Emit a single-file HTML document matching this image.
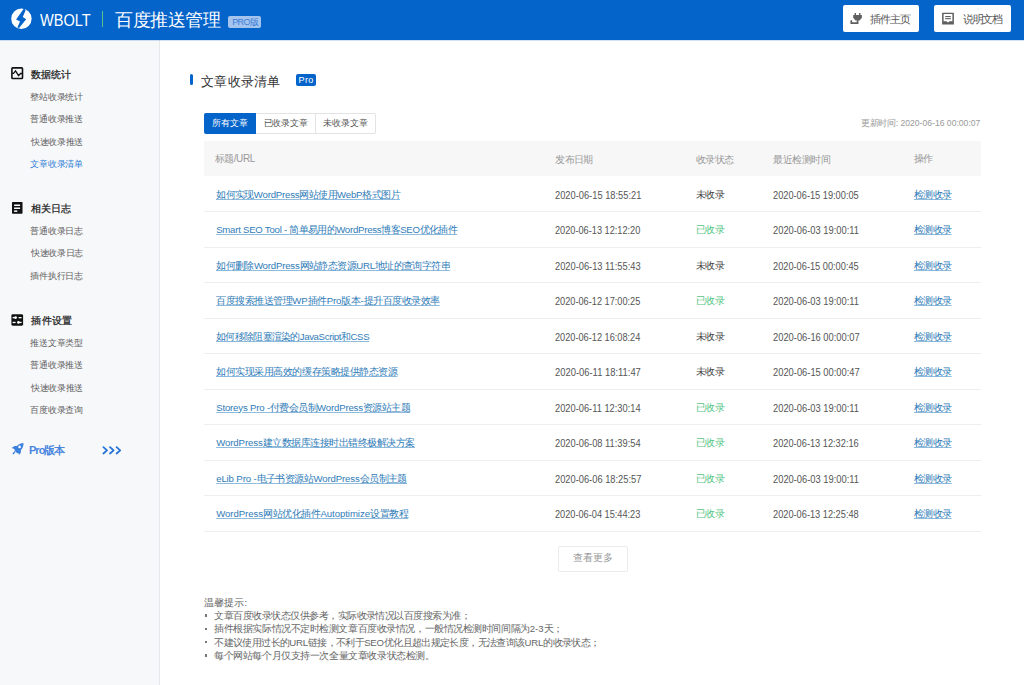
<!DOCTYPE html>
<html><head><meta charset="utf-8">
<style>
*{box-sizing:border-box;margin:0;padding:0}
html,body{width:1024px;height:685px;overflow:hidden;background:#fff;font-family:"Liberation Sans",sans-serif;color:#555}
.a{position:absolute;white-space:nowrap;line-height:1;letter-spacing:var(--ls,0px)}
.lt{letter-spacing:calc(var(--ls,0px) + 0.4px)}
#hd{position:absolute;left:0;top:0;width:1024px;height:40px;background:#0564ca}
#sb{position:absolute;left:0;top:40px;width:160px;height:645px;background:#f7f8fa;border-right:1px solid #e6e8eb}
.btn{position:absolute;top:5px;height:26.5px;background:#fff;border-radius:2px}
.hw{font-size:16.3px;color:#fff;transform-origin:0 0}
.hti{font-size:18px;color:#fff}
.hpro{font-size:9px;color:#3a7ed8}
.btxt{font-size:10.6px;color:#555}
.h{font-size:10.4px;font-weight:normal;color:#222;-webkit-text-stroke:0.25px #222}
.it{font-size:9.4px;color:#606060}
.it.act{color:#2f7fd6}
.prov{font-size:11px;font-weight:bold;color:#4a86de}
.arr{font-size:11px;font-weight:bold;color:#2f7fd6}
.mt{font-size:13.4px;color:#333}
.mpro{font-size:9px;color:#fff}
.tab{font-size:9.2px;color:#555}
.tab.w{color:#fff}
.upd{font-size:8.6px;color:#999}
.th{font-size:10px;color:#999}
.row{position:absolute;left:204px;width:777px;height:1px;background:#eeeeee}
.tl{font-size:9.6px;color:#2f7cb8;text-decoration:underline;text-decoration-color:#8fbbdc;text-underline-offset:0.5px}
.d{font-size:10.3px;color:#555;transform-origin:0 0}
.s0{font-size:9.6px;color:#444}
.s1{font-size:9.6px;color:#55c586}
.more{font-size:9.6px;color:#999}
.nt{font-size:9.6px;color:#666}
</style></head><body>
<div id="hd">
  <svg class="a" style="left:8px;top:5px" width="28" height="28" viewBox="0 0 28 28">
    <circle cx="13.4" cy="13.8" r="10.2" fill="#fff"/>
    <polygon points="15.9,3.5 17.7,4.9 14.8,12.1 18.2,14.3 11.1,23.1 9.4,22.4 12.0,16.5 8.1,14.4" fill="#0564ca"/>
  </svg>
  <div class="a" style="left:102px;top:11px;width:1px;height:16px;background:#5cc28e"></div>
  <div class="a" style="left:228px;top:16px;width:33px;height:12px;border-radius:2px;background:#a4c4ee"></div>
  <div class="btn" style="left:843px;width:76px"></div>
  <svg class="a" style="left:845px;top:8px" width="24" height="22" viewBox="0 0 24 22">
    <rect x="9.6" y="5" width="1.4" height="3" fill="#606060"/>
    <rect x="14.1" y="5" width="1.4" height="3" fill="#606060"/>
    <path d="M8.2 7.1 H16.9 V9.8 L14.6 12.5 H10.5 L8.2 9.8 Z" fill="#606060"/>
    <path d="M12.6 12.3 V15.2 H6.3 V12.2" stroke="#606060" stroke-width="1.7" fill="none"/>
  </svg>
  <div class="btn" style="left:934px;width:77px"></div>
  <svg class="a" style="left:937px;top:8px" width="24" height="22" viewBox="0 0 24 22">
    <path d="M5.1 4.8 H16.9 V16.6 H5.1 Z M6.6 6.1 V13.2 H9.4 L11 14.6 L12.6 13.2 H15.4 V6.1 Z" fill="#606060" fill-rule="evenodd"/>
    <rect x="8.2" y="8" width="5.6" height="1.1" fill="#606060"/>
    <rect x="8.2" y="10.1" width="5.6" height="1.1" fill="#606060"/>
  </svg>
</div>
<div id="sb"></div>
<div id="hdl" class="a" style="left:0;top:40px;width:1024px;height:1px;background:rgba(5,100,202,0.18)"></div>

<svg class="a" style="left:11px;top:67px" width="13" height="13" viewBox="0 0 13 13">
  <rect x="0.9" y="0.9" width="10.6" height="10.6" rx="0.8" fill="none" stroke="#111" stroke-width="1.6"/>
  <path d="M1.2 6.3 H2.6 L4.5 3.9 L7.6 8.7 L9.5 6.5 H11.5" fill="none" stroke="#111" stroke-width="1.3"/>
</svg>
<svg class="a" style="left:12px;top:202px" width="11" height="12" viewBox="0 0 11 12">
  <rect x="0" y="0" width="10.5" height="11.7" rx="0.6" fill="#111"/>
  <rect x="2.1" y="2.5" width="6" height="1.5" fill="#fff"/>
  <rect x="2.1" y="5.5" width="6" height="1.5" fill="#fff"/>
  <rect x="2.1" y="8.4" width="3.2" height="1.5" fill="#fff"/>
</svg>
<svg class="a" style="left:11px;top:314px" width="13" height="12" viewBox="0 0 13 12">
  <rect x="0.4" y="0.2" width="11.7" height="11.5" rx="1.4" fill="#111"/>
  <rect x="1.6" y="3" width="3.8" height="1.3" fill="#fff"/>
  <circle cx="4.6" cy="3.6" r="1.3" fill="#fff"/>
  <rect x="7.6" y="3" width="3" height="1.3" fill="#fff"/>
  <rect x="1.6" y="7.8" width="3" height="1.3" fill="#fff"/>
  <circle cx="7.4" cy="8.4" r="1.3" fill="#fff"/>
  <rect x="7.4" y="7.8" width="3.2" height="1.3" fill="#fff"/>
</svg>
<svg class="a" style="left:6px;top:438px" width="24" height="24" viewBox="0 0 24 24">
  <path d="M17.5 4.9 C14.8 5.0 12.6 6.2 10.9 8.0 L8.6 8.1 L5.6 9.9 L8.5 11.0 C8.4 11.7 8.5 12.3 8.8 12.8 L10.9 14.9 C11.4 15.2 12.0 15.3 12.6 15.2 L13.0 17.1 L14.9 14.4 L14.9 12.0 C16.6 10.3 17.6 8.0 17.5 4.9 Z" fill="#3b80dc"/>
  <circle cx="13.6" cy="8.9" r="1.35" fill="#f7f8fa"/>
  <path d="M7.3 15.6 L8.7 14.0" stroke="#3b80dc" stroke-width="1.4" stroke-linecap="round"/>
</svg>

<svg class="a" style="left:96px;top:440px" width="32" height="20" viewBox="0 0 32 20">
  <path d="M7.4 7.1 L11 10.3 L7.4 13.5 M14 7.1 L17.6 10.3 L14 13.5 M20.6 7.1 L24.2 10.3 L20.6 13.5" fill="none" stroke="#2374d6" stroke-width="1.8" stroke-linecap="round" stroke-linejoin="round"/>
</svg>
<div class="a" style="left:190px;top:74px;width:3px;height:11px;border-radius:1.5px;background:#0564ca"></div>
<div class="a" style="left:296px;top:74px;width:20px;height:12px;border-radius:2px;background:#0564ca"></div>
<div class="a" style="left:204px;top:113px;width:172px;height:21px;border:1px solid #e3e3e3;border-radius:2px"></div>
<div class="a" style="left:204px;top:113px;width:52px;height:21px;background:#0564ca;border-radius:2px 0 0 2px"></div>
<div class="a" style="left:315px;top:113px;width:1px;height:21px;background:#e3e3e3"></div>
<div class="a" style="left:204px;top:141px;width:777px;height:35px;background:#f7f7f7"></div>
<!--ROWS-->
<div class="row" style="top:211.0px"></div>
<div class="row" style="top:246.5px"></div>
<div class="row" style="top:282.0px"></div>
<div class="row" style="top:317.5px"></div>
<div class="row" style="top:353.0px"></div>
<div class="row" style="top:388.5px"></div>
<div class="row" style="top:424.0px"></div>
<div class="row" style="top:459.5px"></div>
<div class="row" style="top:495.0px"></div>
<div class="row" style="top:530.5px"></div>
<div class="a" style="left:204.5px;top:614.3px;width:2px;height:2.5px;background:#777"></div>
<div class="a" style="left:204.5px;top:627.6px;width:2px;height:2.5px;background:#777"></div>
<div class="a" style="left:204.5px;top:640.9px;width:2px;height:2.5px;background:#777"></div>
<div class="a" style="left:204.5px;top:654.2px;width:2px;height:2.5px;background:#777"></div>
<div class="a" style="left:558px;top:546px;width:70px;height:25.5px;border:1px solid #ebebeb;border-radius:2px"></div>
<!--/ROWS-->
<!--TEXT-->
<div id="t_wbolt" class="a hw" style="left:40.10px;top:12.00px;transform:scaleX(0.8931);">WBOLT</div>
<div id="t_title" class="a hti" style="left:115.00px;top:10.90px;--ls:-0.400px;">百度推送管理</div>
<div id="t_pro" class="a hpro" style="left:232.30px;top:17.60px;--ls:-1.100px;"><span class="lt">PRO</span>版</div>
<div id="t_b1" class="a btxt" style="left:870.00px;top:14.00px;--ls:-1.000px;">插件主页</div>
<div id="t_b2" class="a btxt" style="left:963.00px;top:14.00px;--ls:-1.333px;">说明文档</div>
<div id="t_h1" class="a h" style="left:31.30px;top:70.00px;--ls:-0.100px;">数据统计</div>
<div id="t_h2" class="a h" style="left:31.30px;top:203.90px;--ls:-0.100px;">相关日志</div>
<div id="t_h3" class="a h" style="left:31.30px;top:315.60px;--ls:0.367px;">插件设置</div>
<div id="t_i0" class="a it" style="left:30.30px;top:91.60px;--ls:-0.240px;">整站收录统计</div>
<div id="t_i1" class="a it" style="left:30.30px;top:113.70px;--ls:-0.240px;">普通收录推送</div>
<div id="t_i2" class="a it" style="left:31.30px;top:136.60px;--ls:-0.440px;">快速收录推送</div>
<div id="t_i3" class="a it act" style="left:30.30px;top:158.60px;--ls:-0.240px;">文章收录清单</div>
<div id="t_i4" class="a it" style="left:30.30px;top:226.30px;--ls:-0.240px;">普通收录日志</div>
<div id="t_i5" class="a it" style="left:31.30px;top:248.40px;--ls:-0.440px;">快速收录日志</div>
<div id="t_i6" class="a it" style="left:30.30px;top:270.80px;--ls:-0.240px;">插件执行日志</div>
<div id="t_i7" class="a it" style="left:30.30px;top:337.80px;--ls:-0.240px;">推送文章类型</div>
<div id="t_i8" class="a it" style="left:30.30px;top:360.20px;--ls:-0.240px;">普通收录推送</div>
<div id="t_i9" class="a it" style="left:31.30px;top:382.90px;--ls:-0.440px;">快速收录推送</div>
<div id="t_i10" class="a it" style="left:30.30px;top:404.60px;--ls:-0.240px;">百度收录查询</div>
<div id="t_pro2" class="a prov" style="left:29.00px;top:445.00px;--ls:-1.375px;"><span class="lt">Pro</span>版本</div>
<div id="t_mt" class="a mt" style="left:201.20px;top:74.90px;--ls:0.220px;">文章收录清单</div>
<div id="t_mpro" class="a mpro" style="left:298.50px;top:76.00px;--ls:0.000px;"><span class="lt">Pro</span></div>
<div id="t_tab1" class="a tab w" style="left:212.20px;top:118.70px;--ls:-0.033px;">所有文章</div>
<div id="t_tab2" class="a tab" style="left:263.50px;top:118.70px;--ls:-0.075px;">已收录文章</div>
<div id="t_tab3" class="a tab" style="left:323.40px;top:118.70px;--ls:-0.100px;">未收录文章</div>
<div id="t_upd" class="a upd" style="left:861.20px;top:119.10px;--ls:-0.392px;">更新时间<span class="lt">: 2020-06-16 00:00:07</span></div>
<div id="t_th1" class="a th" style="left:215.20px;top:153.70px;--ls:-0.780px;">标题<span class="lt">/URL</span></div>
<div id="t_th2" class="a th" style="left:555.20px;top:154.70px;--ls:-0.633px;">发布日期</div>
<div id="t_th3" class="a th" style="left:695.70px;top:154.70px;--ls:-0.467px;">收录状态</div>
<div id="t_th4" class="a th" style="left:773.40px;top:154.70px;--ls:-0.480px;">最近检测时间</div>
<div id="t_th5" class="a th" style="left:914.00px;top:153.70px;--ls:-1.000px;">操作</div>
<div id="t_r0t" class="a tl" style="left:216.20px;top:189.50px;--ls:-0.587px;">如何实现<span class="lt">WordPress</span>网站使用<span class="lt">WebP</span>格式图片</div>
<div id="t_r0d" class="a d" style="left:555.13px;top:190.70px;transform:scaleX(0.9027);">2020-06-15 18:55:21</div>
<div id="t_r0s" class="a s0" style="left:695.70px;top:189.50px;--ls:-0.550px;">未收录</div>
<div id="t_r0c" class="a d" style="left:773.43px;top:190.70px;transform:scaleX(0.8966);">2020-06-15 19:00:05</div>
<div id="t_r0k" class="a tl" style="left:914.00px;top:189.50px;--ls:-0.600px;">检测收录</div>
<div id="t_r1t" class="a tl" style="left:216.20px;top:225.00px;--ls:-0.633px;"><span class="lt">Smart SEO Tool - </span>简单易用的<span class="lt">WordPress</span>博客<span class="lt">SEO</span>优化插件</div>
<div id="t_r1d" class="a d" style="left:555.13px;top:225.70px;transform:scaleX(0.8924);">2020-06-13 12:12:20</div>
<div id="t_r1s" class="a s1" style="left:695.70px;top:225.00px;--ls:-0.550px;">已收录</div>
<div id="t_r1c" class="a d" style="left:773.43px;top:225.70px;transform:scaleX(0.9065);">2020-06-03 19:00:11</div>
<div id="t_r1k" class="a tl" style="left:914.00px;top:225.00px;--ls:-0.600px;">检测收录</div>
<div id="t_r2t" class="a tl" style="left:216.20px;top:260.50px;--ls:-0.576px;">如何删除<span class="lt">WordPress</span>网站静态资源<span class="lt">URL</span>地址的查询字符串</div>
<div id="t_r2d" class="a d" style="left:555.11px;top:261.70px;transform:scaleX(0.9025);">2020-06-13 11:55:43</div>
<div id="t_r2s" class="a s0" style="left:695.70px;top:260.50px;--ls:-0.550px;">未收录</div>
<div id="t_r2c" class="a d" style="left:773.43px;top:261.70px;transform:scaleX(0.8966);">2020-06-15 00:00:45</div>
<div id="t_r2k" class="a tl" style="left:914.00px;top:260.50px;--ls:-0.600px;">检测收录</div>
<div id="t_r3t" class="a tl" style="left:216.20px;top:296.00px;--ls:-0.484px;">百度搜索推送管理<span class="lt">WP</span>插件<span class="lt">Pro</span>版本<span class="lt">-</span>提升百度收录效率</div>
<div id="t_r3d" class="a d" style="left:555.13px;top:296.70px;transform:scaleX(0.8924);">2020-06-12 17:00:25</div>
<div id="t_r3s" class="a s1" style="left:695.70px;top:296.00px;--ls:-0.550px;">已收录</div>
<div id="t_r3c" class="a d" style="left:773.43px;top:296.70px;transform:scaleX(0.9065);">2020-06-03 19:00:11</div>
<div id="t_r3k" class="a tl" style="left:914.00px;top:296.00px;--ls:-0.600px;">检测收录</div>
<div id="t_r4t" class="a tl" style="left:216.20px;top:331.50px;--ls:-0.727px;">如何移除阻塞渲染的<span class="lt">JavaScript</span>和<span class="lt">CSS</span></div>
<div id="t_r4d" class="a d" style="left:555.13px;top:332.70px;transform:scaleX(0.8924);">2020-06-12 16:08:24</div>
<div id="t_r4s" class="a s0" style="left:695.70px;top:331.50px;--ls:-0.550px;">未收录</div>
<div id="t_r4c" class="a d" style="left:773.42px;top:332.70px;transform:scaleX(0.9070);">2020-06-16 00:00:07</div>
<div id="t_r4k" class="a tl" style="left:914.00px;top:331.50px;--ls:-0.600px;">检测收录</div>
<div id="t_r5t" class="a tl" style="left:216.20px;top:367.00px;--ls:-0.461px;">如何实现采用高效的缓存策略提供静态资源</div>
<div id="t_r5d" class="a d" style="left:555.11px;top:367.70px;transform:scaleX(0.9122);">2020-06-11 18:11:47</div>
<div id="t_r5s" class="a s0" style="left:695.70px;top:367.00px;--ls:-0.550px;">未收录</div>
<div id="t_r5c" class="a d" style="left:773.42px;top:367.70px;transform:scaleX(0.9070);">2020-06-15 00:00:47</div>
<div id="t_r5k" class="a tl" style="left:914.00px;top:367.00px;--ls:-0.600px;">检测收录</div>
<div id="t_r6t" class="a tl" style="left:216.20px;top:402.50px;--ls:-0.571px;"><span class="lt">Storeys Pro -</span>付费会员制<span class="lt">WordPress</span>资源站主题</div>
<div id="t_r6d" class="a d" style="left:555.11px;top:403.70px;transform:scaleX(0.9025);">2020-06-11 12:30:14</div>
<div id="t_r6s" class="a s1" style="left:695.70px;top:402.50px;--ls:-0.550px;">已收录</div>
<div id="t_r6c" class="a d" style="left:773.43px;top:403.70px;transform:scaleX(0.9065);">2020-06-03 19:00:11</div>
<div id="t_r6k" class="a tl" style="left:914.00px;top:402.50px;--ls:-0.600px;">检测收录</div>
<div id="t_r7t" class="a tl" style="left:216.20px;top:438.00px;--ls:-0.487px;"><span class="lt">WordPress</span>建立数据库连接时出错终极解决方案</div>
<div id="t_r7d" class="a d" style="left:555.11px;top:438.70px;transform:scaleX(0.9025);">2020-06-08 11:39:54</div>
<div id="t_r7s" class="a s1" style="left:695.70px;top:438.00px;--ls:-0.550px;">已收录</div>
<div id="t_r7c" class="a d" style="left:773.43px;top:438.70px;transform:scaleX(0.8966);">2020-06-13 12:32:16</div>
<div id="t_r7k" class="a tl" style="left:914.00px;top:438.00px;--ls:-0.600px;">检测收录</div>
<div id="t_r8t" class="a tl" style="left:216.20px;top:473.50px;--ls:-0.524px;"><span class="lt">eLib Pro -</span>电子书资源站<span class="lt">WordPress</span>会员制主题</div>
<div id="t_r8d" class="a d" style="left:555.13px;top:474.70px;transform:scaleX(0.9027);">2020-06-06 18:25:57</div>
<div id="t_r8s" class="a s1" style="left:695.70px;top:473.50px;--ls:-0.550px;">已收录</div>
<div id="t_r8c" class="a d" style="left:773.43px;top:474.70px;transform:scaleX(0.9065);">2020-06-03 19:00:11</div>
<div id="t_r8k" class="a tl" style="left:914.00px;top:473.50px;--ls:-0.600px;">检测收录</div>
<div id="t_r9t" class="a tl" style="left:216.20px;top:509.00px;--ls:-0.447px;"><span class="lt">WordPress</span>网站优化插件<span class="lt">Autoptimize</span>设置教程</div>
<div id="t_r9d" class="a d" style="left:555.13px;top:509.70px;transform:scaleX(0.8924);">2020-06-04 15:44:23</div>
<div id="t_r9s" class="a s1" style="left:695.70px;top:509.00px;--ls:-0.550px;">已收录</div>
<div id="t_r9c" class="a d" style="left:773.43px;top:509.70px;transform:scaleX(0.8966);">2020-06-13 12:25:48</div>
<div id="t_r9k" class="a tl" style="left:914.00px;top:509.00px;--ls:-0.600px;">检测收录</div>
<div id="t_more" class="a more" style="left:573.40px;top:553.00px;--ls:-0.233px;">查看更多</div>
<div id="t_n0" class="a nt" style="left:204.40px;top:597.90px;--ls:0.000px;">温馨提示<span class="lt">:</span></div>
<div id="t_n1" class="a nt" style="left:214.20px;top:611.00px;--ls:-0.512px;">文章百度收录状态仅供参考，实际收录情况以百度搜索为准；</div>
<div id="t_n2" class="a nt" style="left:214.20px;top:624.30px;--ls:-0.438px;">插件根据实际情况不定时检测文章百度收录情况，一般情况检测时间间隔为<span class="lt">2-3</span>天；</div>
<div id="t_n3" class="a nt" style="left:214.20px;top:637.60px;--ls:-0.614px;">不建议使用过长的<span class="lt">URL</span>链接，不利于<span class="lt">SEO</span>优化且超出规定长度，无法查询该<span class="lt">URL</span>的收录状态；</div>
<div id="t_n4" class="a nt" style="left:214.20px;top:650.90px;--ls:-0.427px;">每个网站每个月仅支持一次全量文章收录状态检测。</div>
<!--/TEXT-->
</body></html>
